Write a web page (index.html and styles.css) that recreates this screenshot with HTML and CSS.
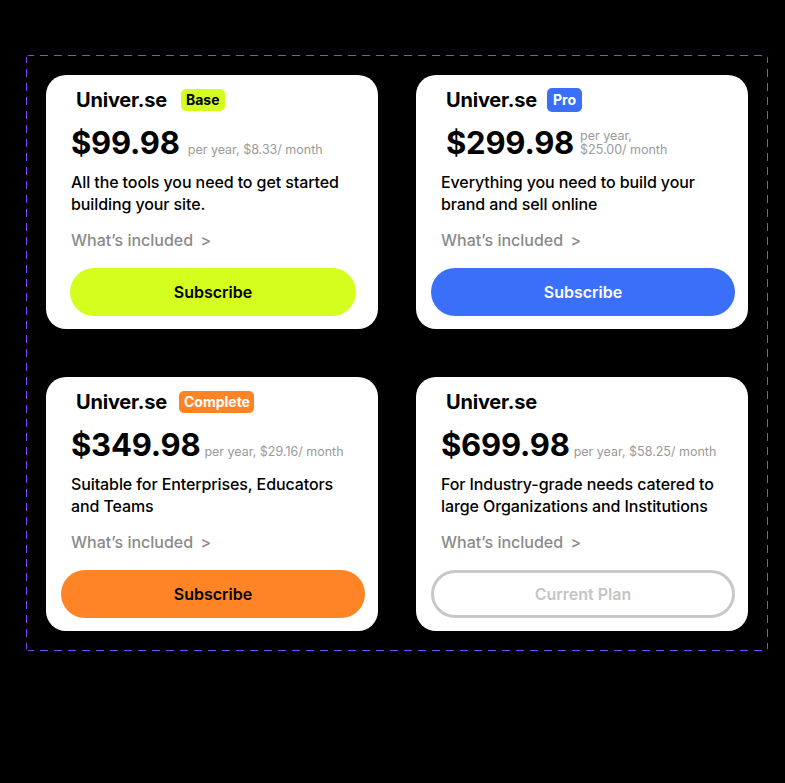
FILE: index.html
```html
<!DOCTYPE html>
<html lang="en">
<head>
    <meta charset="UTF-8">
    <meta name="viewport" content="width=device-width, initial-scale=1.0">
    <title>Univer.se plans</title>
    <link rel="stylesheet" href="styles.css">
</head>
<body>

    <div class="plans">
        <div class="plan">
            <div class="plan-head">
                <span class="brand">Univer.se</span>
                <span class="badge badge-base">Base</span>
            </div>
            <div class="price-row">
                <span class="price">$99.98</span>
                <span class="per">per year, $8.33/ month</span>
            </div>
            <p class="desc">All the tools you need to get started building your site.</p>
            <a class="more" href="#">What’s included <span class="arrow">&gt;</span></a>
            <button class="btn btn-base" type="button">Subscribe</button>
        </div>

        <div class="plan">
            <div class="plan-head">
                <span class="brand">Univer.se</span>
                <span class="badge badge-pro">Pro</span>
            </div>
            <div class="price-row price-row-wrap">
                <span class="price">$299.98</span>
                <span class="per">per year,<br>$25.00/ month</span>
            </div>
            <p class="desc">Everything you need to build your brand and sell online</p>
            <a class="more" href="#">What’s included <span class="arrow">&gt;</span></a>
            <button class="btn btn-pro" type="button">Subscribe</button>
        </div>

        <div class="plan">
            <div class="plan-head">
                <span class="brand">Univer.se</span>
                <span class="badge badge-complete">Complete</span>
            </div>
            <div class="price-row price-row-tight">
                <span class="price">$349.98</span>
                <span class="per">per year, $29.16/ month</span>
            </div>
            <p class="desc">Suitable for Enterprises, Educators and Teams</p>
            <a class="more" href="#">What’s included <span class="arrow">&gt;</span></a>
            <button class="btn btn-complete" type="button">Subscribe</button>
        </div>

        <div class="plan">
            <div class="plan-head">
                <span class="brand">Univer.se</span>
            </div>
            <div class="price-row price-row-tight">
                <span class="price">$699.98</span>
                <span class="per">per year, $58.25/ month</span>
            </div>
            <p class="desc">For Industry-grade needs catered to large Organizations and Institutions</p>
            <a class="more" href="#">What’s included <span class="arrow">&gt;</span></a>
            <button class="btn btn-current" type="button">Current Plan</button>
        </div>
    </div>

</body>
</html>
```

FILE: styles.css
```css
body {
    font-family: Inter, "Noto Sans", sans-serif;
    background-color: #000;
    margin: 0;
    padding: 55px 18px 0 26px;
    min-height: 783px;
    box-sizing: border-box;
}

.plans {
    width: 742px;
    box-sizing: border-box;
    padding: 20px 19px 20px 20px;
    display: grid;
    grid-template-columns: 332px 332px;
    column-gap: 38px;
    row-gap: 48px;
    border-radius: 4px;
    background:
        repeating-linear-gradient(90deg, #8d44ff 0 8px, transparent 8px 14px) top left / 100% 1px no-repeat,
        repeating-linear-gradient(90deg, #8d44ff 0 8px, transparent 8px 14px) bottom left / 100% 1px no-repeat,
        repeating-linear-gradient(180deg, #8d44ff 0 8px, transparent 8px 14px) top left / 1px 100% no-repeat,
        repeating-linear-gradient(180deg, #8d44ff 0 8px, transparent 8px 14px) top right / 1px 100% no-repeat;
}

.plan {
    background-color: #fff;
    border-radius: 20px;
    height: 254px;
    box-sizing: border-box;
    padding: 14px 25px 0 25px;
    display: flex;
    flex-direction: column;
}

.plan-head {
    display: flex;
    align-items: center;
    height: 22px;
    padding-left: 5px;
}

.brand {
    font-size: 20px;
    font-weight: 700;
    color: #000;
    letter-spacing: -0.2px;
}

.badge {
    margin-left: 14px;
    height: 22px;
    line-height: 22px;
    padding: 0 5px;
    border-radius: 5px;
    font-size: 14px;
    font-weight: 700;
}

.badge-base {
    background-color: #d4ff1e;
    color: #000;
}

.badge-pro {
    background-color: #3a6ffa;
    color: #fff;
    margin-left: 10px;
    padding: 0 6px;
    height: 24px;
    line-height: 24px;
}

.badge-complete {
    background-color: #ff8426;
    color: #fff;
    margin-left: 12px;
    padding: 0 4px 0 5px;
}

.price-row {
    display: flex;
    align-items: baseline;
    margin-top: 16px;
    height: 32px;
}

.price {
    font-size: 31px;
    line-height: 32px;
    font-weight: 700;
    color: #000;
    letter-spacing: -0.2px;
}

.per {
    margin-left: 8px;
    font-size: 12.5px;
    line-height: 14px;
    color: #9a9a9a;
    white-space: nowrap;
}

.price-row-wrap {
    padding-left: 5px;
    align-items: flex-end;
}

.price-row-wrap .per {
    margin-left: 6px;
    padding-bottom: 2px;
}

.price-row-tight .per {
    margin-left: 4px;
}

.desc {
    margin: 12px 0 0 0;
    font-size: 16px;
    line-height: 22px;
    font-weight: 500;
    color: #000;
    letter-spacing: -0.1px;
}

.more {
    margin-top: 14px;
    font-size: 16px;
    line-height: 22px;
    font-weight: 500;
    color: #8a8a8a;
    text-decoration: none;
}

.arrow {
    margin-left: 3px;
}

.btn {
    margin: 17px -12px 0 -10px;
    height: 48px;
    border: none;
    border-radius: 24px;
    font-family: inherit;
    font-size: 16px;
    font-weight: 600;
    cursor: pointer;
}

.btn-base {
    margin: 17px -3px 0 -1px;
    background-color: #d4ff1e;
    color: #000;
}

.btn-pro {
    background-color: #3a6ffa;
    color: #fff;
}

.btn-complete {
    background-color: #ff8426;
    color: #000;
}

.btn-current {
    background-color: #fff;
    border: 3px solid #c8c8c8;
    color: #c4c4c4;
}
```
